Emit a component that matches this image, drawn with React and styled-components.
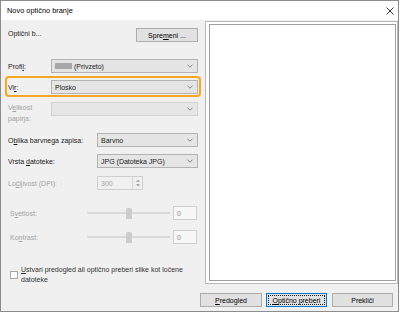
import React from 'react';
import styled, { createGlobalStyle } from 'styled-components';

const GlobalStyle = createGlobalStyle`
  html, body {
    margin: 0;
    padding: 0;
    background: #fff;
  }
  body {
    font-family: "Liberation Sans", Arial, sans-serif;
    font-size: 7px;
    color: #1a1a1a;
  }
`;

const Window = styled.div`
  width: 399px;
  height: 312px;
  box-sizing: border-box;
  border: 1px solid #8c8c8c;
  background: #f0f0f0;
  display: flex;
  flex-direction: column;
`;

const TitleBar = styled.div`
  height: 19px;
  flex-shrink: 0;
  background: #fff;
  display: flex;
  align-items: center;
  justify-content: space-between;
  padding: 0 4px 0 6px;
  font-size: 7.4px;
  color: #000;
`;

const Body = styled.div`
  flex: 1;
  display: flex;
  flex-direction: column;
`;

const MainRow = styled.div`
  height: 264px;
  display: flex;
`;

const LeftPanel = styled.div`
  width: 200px;
  box-sizing: border-box;
  padding: 8px 3px 0 7px;
  display: flex;
  flex-direction: column;
`;

const Row = styled.div`
  display: flex;
  align-items: ${(p) => p.$align || 'center'};
  margin-top: ${(p) => p.$top || 0}px;
  padding-left: ${(p) => p.$indent || 0}px;
`;

const Label = styled.div`
  width: ${(p) => p.$w}px;
  flex-shrink: 0;
  line-height: 11px;
  color: ${(p) => (p.$disabled ? '#a3a3a3' : '#1a1a1a')};
`;

const Acc = styled.span`
  text-decoration: underline;
  text-underline-offset: 1px;
`;

const Separator = styled.div`
  height: 1px;
  background: #d5d5d5;
  margin: ${(p) => p.$top}px 0 0 2px;
`;

const Button = styled.div`
  width: ${(p) => p.$w}px;
  height: 14px;
  box-sizing: border-box;
  border: 1px solid ${(p) => (p.$primary ? '#0078d7' : '#adadad')};
  background: #e1e1e1;
  display: flex;
  align-items: stretch;
  padding: 1px;
  margin-left: ${(p) => p.$ml || 0}px;
  color: #000;
`;

const ButtonFace = styled.span`
  flex: 1;
  display: flex;
  align-items: center;
  justify-content: center;
  border: 1px ${(p) => (p.$focus ? 'dotted #222' : 'solid transparent')};
`;

const Combo = styled.div`
  flex: 1;
  height: 14px;
  box-sizing: border-box;
  border: 1px solid ${(p) => (p.$disabled ? '#d2d2d2' : '#b3b3b3')};
  background: ${(p) => (p.$disabled ? '#e6e6e6' : '#e5e5e5')};
  display: flex;
  align-items: center;
  padding: 0 4px 0 3px;
  gap: 2px;
`;

const ComboText = styled.span`
  flex: 1;
  white-space: nowrap;
`;

const Blur = styled.span`
  width: 17px;
  height: 6px;
  background: #a8a8a8;
  border-radius: 1px;
  box-shadow: 0 0 1px #b8b8b8;
`;

const Highlight = styled.div`
  margin: 3px -3px 0 -3px;
  border: 2px solid #f6a623;
  border-radius: 4px;
  padding: 2px 1px 1px 1px;
`;

const Spin = styled.div`
  width: 46px;
  height: 14px;
  box-sizing: border-box;
  border: 1px solid #cfcfcf;
  background: #f0f0f0;
  display: flex;
  color: #a3a3a3;
`;

const SpinValue = styled.span`
  flex: 1;
  display: flex;
  align-items: center;
  padding-left: 3px;
`;

const SpinArrows = styled.span`
  width: 9px;
  border-left: 1px solid #d8d8d8;
  display: flex;
  flex-direction: column;
  align-items: center;
  justify-content: space-around;
  padding: 1px 0;
`;

const Slider = styled.div`
  width: 83px;
  height: 12px;
  display: flex;
  align-items: center;
  justify-content: center;
  background: linear-gradient(#f0f0f0 5px, #dadada 5px, #dadada 7px, #f0f0f0 7px);
`;

const Thumb = styled.span`
  width: 6px;
  height: 11px;
  background: #cccccc;
  border-radius: 2px 2px 0 0;
  margin-left: 1px;
`;

const ValueBox = styled.div`
  width: 24px;
  height: 14px;
  box-sizing: border-box;
  margin-left: 3px;
  border: 1px solid #cfcfcf;
  background: #f7f7f7;
  display: flex;
  align-items: center;
  padding-left: 3px;
  color: #7d8ca0;
`;

const CheckBox = styled.span`
  width: 8px;
  height: 8px;
  box-sizing: border-box;
  flex-shrink: 0;
  border: 1px solid #a8a8a8;
  background: #fff;
  margin-top: 6px;
`;

const CheckText = styled.div`
  margin-left: 3px;
  width: 172px;
  line-height: 10px;
  color: #333;
`;

const Frame = styled.div`
  width: 193px;
  height: 263px;
  margin: 1px 0 0 4px;
  box-sizing: border-box;
  border: 1px solid #b9b9b9;
  background: #fff;
  padding: 2px 1px 2px 3px;
  display: flex;
`;

const FrameInner = styled.div`
  flex: 1;
  border: 1px solid #a0a0a0;
`;

const ButtonRow = styled.div`
  display: flex;
  justify-content: flex-end;
  margin-top: 9px;
  padding-right: 5px;
`;

const Chevron = () => (
  <svg width="6" height="4" viewBox="0 0 6 4">
    <path d="M0.5 0.8 L3 3.2 L5.5 0.8" fill="none" stroke="#6b6b6b" strokeWidth="0.8" />
  </svg>
);

const CloseIcon = () => (
  <svg width="8" height="8" viewBox="0 0 8 8">
    <path d="M0.5 0.5 L7.5 7.5 M7.5 0.5 L0.5 7.5" stroke="#222" strokeWidth="0.9" />
  </svg>
);

const Arrow = ({ up }) => (
  <svg width="4" height="3" viewBox="0 0 4 3">
    <path d={up ? 'M0 3 L2 0.5 L4 3 Z' : 'M0 0 L2 2.5 L4 0 Z'} fill="#a3a3a3" />
  </svg>
);

const App = () => (
  <>
    <GlobalStyle />
    <Window>
      <TitleBar>
        <span>Novo optično branje</span>
        <CloseIcon />
      </TitleBar>
      <Body>
        <MainRow>
          <LeftPanel>
            <Row $align="flex-start" style={{ justifyContent: 'space-between' }}>
              <Label $w={60}>Optični b...</Label>
              <Button $w={62}>
                <ButtonFace>
                  Spre
                  <Acc>m</Acc>
                  eni ...
                </ButtonFace>
              </Button>
            </Row>
            <Separator $top={10} />
            <Row $top={7}>
              <Label $w={43}>
                Profi
                <Acc>l</Acc>:
              </Label>
              <Combo>
                <Blur />
                <ComboText>(Privzeto)</ComboText>
                <Chevron />
              </Combo>
            </Row>
            <Highlight>
              <Row>
                <Label $w={43}>
                  Vi
                  <Acc>r</Acc>:
                </Label>
                <Combo>
                  <ComboText>Plosko</ComboText>
                  <Chevron />
                </Combo>
              </Row>
            </Highlight>
            <Row $top={5} $align="flex-start">
              <Label $w={43} $disabled>
                V
                <Acc>e</Acc>
                likost papirja:
              </Label>
              <Combo $disabled>
                <ComboText />
                <Chevron />
              </Combo>
            </Row>
            <Separator $top={7} />
            <Row $top={2}>
              <Label $w={89}>
                O
                <Acc>b</Acc>
                lika barvnega zapisa:
              </Label>
              <Combo>
                <ComboText>Barvno</ComboText>
                <Chevron />
              </Combo>
            </Row>
            <Row $top={7}>
              <Label $w={89}>
                Vrsta <Acc>d</Acc>
                atoteke:
              </Label>
              <Combo>
                <ComboText>JPG (Datoteka JPG)</ComboText>
                <Chevron />
              </Combo>
            </Row>
            <Row $top={8}>
              <Label $w={89} $disabled>
                Lo
                <Acc>č</Acc>
                ljivost (DPI):
              </Label>
              <Spin>
                <SpinValue>300</SpinValue>
                <SpinArrows>
                  <Arrow up />
                  <Arrow />
                </SpinArrows>
              </Spin>
            </Row>
            <Separator $top={8} />
            <Row $top={8} $indent={2}>
              <Label $w={77} $disabled>
                S
                <Acc>v</Acc>
                etlost:
              </Label>
              <Slider>
                <Thumb />
              </Slider>
              <ValueBox>0</ValueBox>
            </Row>
            <Row $top={10} $indent={2}>
              <Label $w={77} $disabled>
                Ko
                <Acc>n</Acc>
                trast:
              </Label>
              <Slider>
                <Thumb />
              </Slider>
              <ValueBox>0</ValueBox>
            </Row>
            <Row $top={21} $indent={2} $align="flex-start">
              <CheckBox />
              <CheckText>
                <Acc>U</Acc>
                stvari predogled ali optično preberi slike kot ločene datoteke
              </CheckText>
            </Row>
          </LeftPanel>
          <Frame>
            <FrameInner />
          </Frame>
        </MainRow>
        <ButtonRow>
          <Button $w={62}>
            <ButtonFace>
              <Acc>P</Acc>
              redogled
            </ButtonFace>
          </Button>
          <Button $w={61} $ml={4} $primary>
            <ButtonFace $focus>
              <Acc>O</Acc>
              ptično preberi
            </ButtonFace>
          </Button>
          <Button $w={61} $ml={5}>
            <ButtonFace>Prekliči</ButtonFace>
          </Button>
        </ButtonRow>
      </Body>
    </Window>
  </>
);

export default App;
